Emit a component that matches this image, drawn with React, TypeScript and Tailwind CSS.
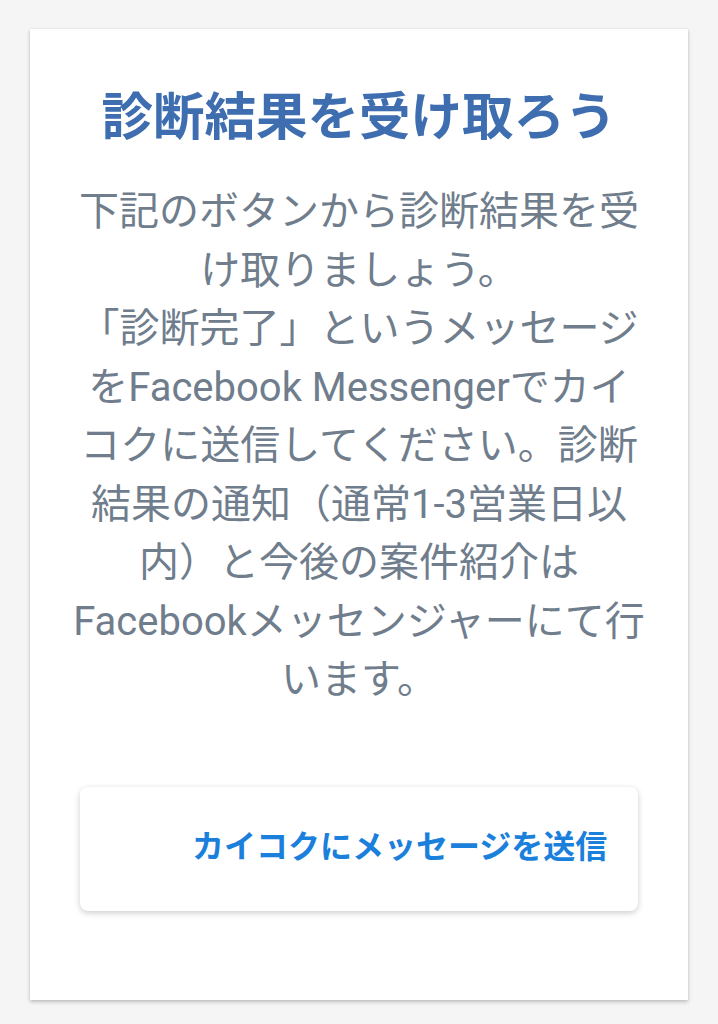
export default function App() {
  const font = { fontFamily: 'Roboto, "Noto Sans CJK JP", "Noto Sans", sans-serif' };

  return (
    <div className="min-h-screen bg-[#f5f5f5] px-[30px] pt-[29px]" style={font}>
      <div className="flex h-[971px] flex-col items-center bg-white px-[29px] pt-[56px] shadow-[0_2px_4px_rgba(0,0,0,0.22),0_0_2px_rgba(0,0,0,0.08)]">
        <h1 className="whitespace-nowrap text-center text-[51.5px] font-bold leading-[66px] text-[#3e6eb0]">
          診断結果を受け取ろう
        </h1>

        <p className="mt-[32px] whitespace-nowrap text-center text-[40px] leading-[58.5px] text-[#6f7d8c]">
          下記のボタンから診断結果を受
          <br />
          け取りましょう。
          <br />
          「診断完了」というメッセージ
          <br />
          をFacebook Messengerでカイ
          <br />
          コクに送信してください。診断
          <br />
          結果の通知（通常1-3営業日以
          <br />
          内）と今後の案件紹介は
          <br />
          Facebookメッセンジャーにて行
          <br />
          います。
        </p>

        <button className="mt-[77px] flex h-[124px] w-[558px] items-center rounded-[8px] bg-white pb-[4px] pl-[112px] shadow-[0_2px_6px_rgba(0,0,0,0.2)]">
          <span className="text-[32px] font-bold text-[#1b7fdc]">
            カイコクにメッセージを送信
          </span>
        </button>
      </div>
    </div>
  );
}
